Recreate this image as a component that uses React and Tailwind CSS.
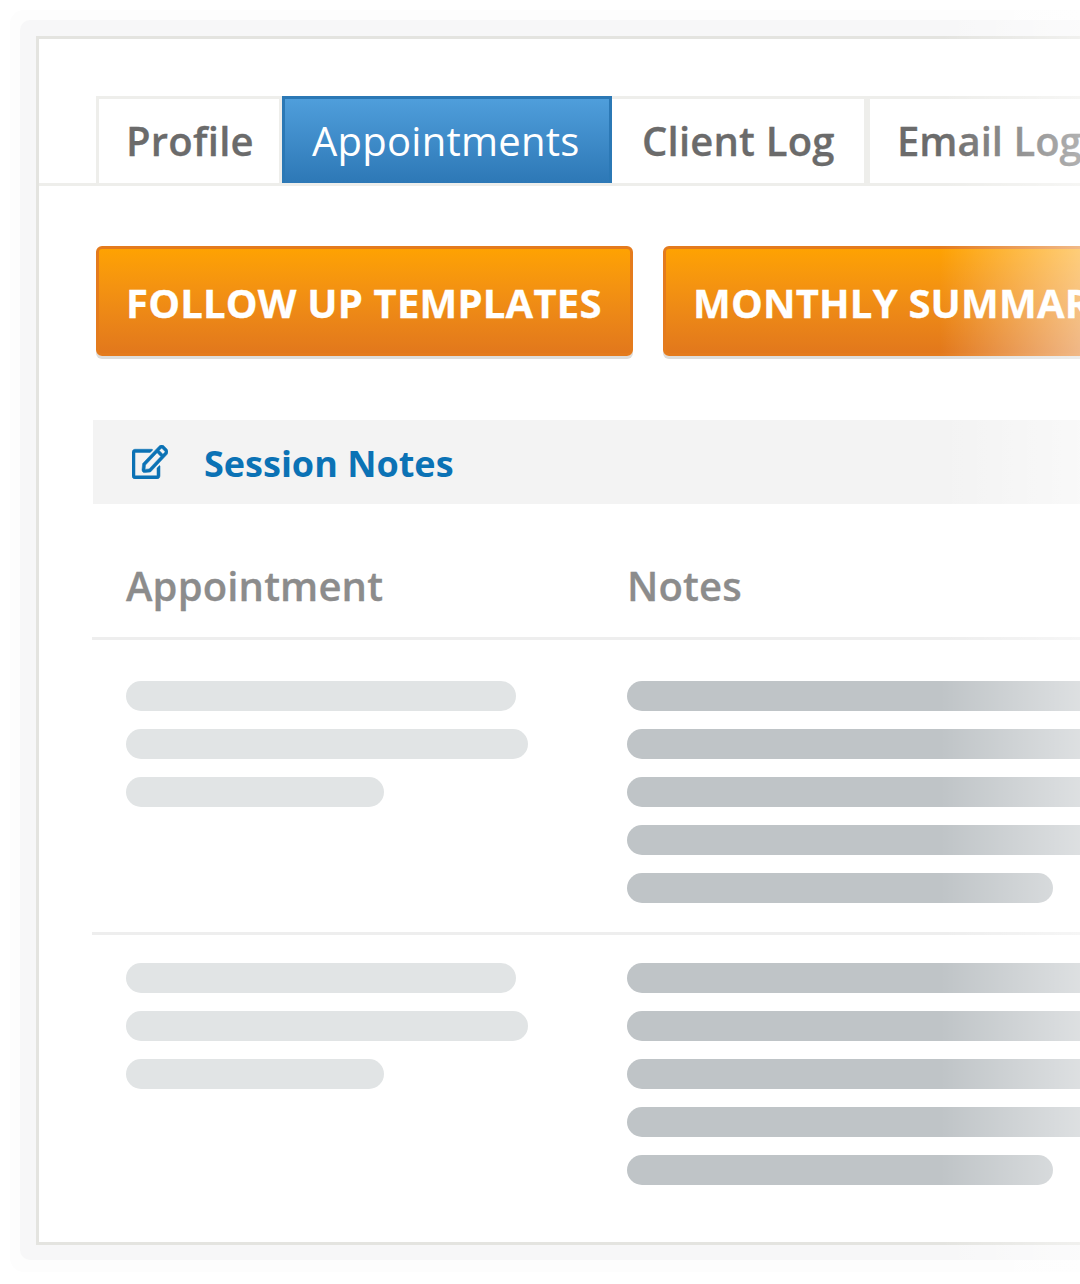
import React from 'react'
import { FaRegEdit } from 'react-icons/fa'

const TABS = [
  {
    label: 'Profile',
    className:
      'w-[186px] border-[#eeeeeb] border-b-0 pl-[27px] tracking-[0.25px] text-[#6b6b6b] font-semibold [-webkit-text-stroke:0.3px]',
  },
  {
    label: 'Appointments',
    className:
      'w-[330px] border-[#2b78b5] border-b-0 bg-gradient-to-b from-[#4f9edb] to-[#2d78b6] pl-[27px] tracking-[0.25px] text-white font-normal',
  },
  {
    label: 'Client Log',
    className:
      'w-[255px] border-[#eeeeeb] border-b-0 border-l-0 pl-[30px] tracking-[0.2px] text-[#6b6b6b] font-semibold [-webkit-text-stroke:0.3px]',
  },
  {
    label: 'Email Log',
    className: 'w-[300px] border-[#eeeeeb] border-b-0 pl-[27px] text-[#6b6b6b] font-semibold [-webkit-text-stroke:0.3px]',
  },
]

const ROWS = [
  { top: 'pt-[41px] pb-[29px]', border: 'border-b-[3px]' },
  { top: 'pt-[28px] pb-[57px]', border: '' },
]

const LEFT_BARS = ['w-[390px]', 'w-[402px]', 'w-[258px]']
const RIGHT_BARS = ['w-[600px]', 'w-[600px]', 'w-[600px]', 'w-[600px]', 'w-[426px]']

function ActionButton({ label, className }) {
  return (
    <button
      className={`h-[110px] shrink-0 rounded-[6px] border-[3px] border-[#e47b1d] bg-gradient-to-b from-[#fea202] to-[#e2781c] pl-[27px] pt-[4px] text-left text-[40px] font-bold tracking-[0.2px] whitespace-nowrap text-white shadow-[0_3px_0_#dddddb] [-webkit-text-stroke:0.3px] ${className}`}
    >
      {label}
    </button>
  )
}

export default function App() {
  return (
    <div className="relative h-[1284px] w-[1080px] overflow-hidden bg-white font-['Open_Sans',sans-serif]">
      <div className="ml-[10px] mt-[10px] w-[1200px] rounded-[14px] bg-[#fdfdfd] pb-[12px] pl-[10px] pt-[10px]">
        <div className="rounded-[10px] bg-[#f7f7f8] pb-[15px] pl-[16px] pt-[16px]">
          <div className="h-[1209px] border-[3px] border-[#e4e4e0] bg-white">
            <div className="mt-[57px] flex h-[90px] gap-0 border-b-[3px] border-[#eeeeeb] pl-[57px]">
              {TABS.map((tab) => (
                <div
                  key={tab.label}
                  className={`flex h-[87px] shrink-0 items-center border-[3px] text-[40px] whitespace-nowrap ${tab.className}`}
                >
                  {tab.label}
                </div>
              ))}
            </div>

            <div className="ml-[57px] mt-[60px] flex gap-[30px]">
              <ActionButton label="FOLLOW UP TEMPLATES" className="w-[537px]" />
              <ActionButton label="MONTHLY SUMMARY" className="w-[537px]" />
            </div>

            <div className="ml-[54px] mt-[64px] flex h-[84px] items-center bg-[#f3f3f3] pl-[39px] text-[36px] font-bold text-[#0b72b5]">
              <FaRegEdit
                preserveAspectRatio="none"
                stroke="currentColor"
                strokeWidth="8"
                className="h-[34px] w-[36px] shrink-0"
              />
              <span className="ml-[36px] pt-[4px]">Session Notes</span>
            </div>

            <div className="ml-[53px]">
              <div className="flex h-[136px] items-center border-b-[3px] border-[#eeeeee] pl-[34px] pt-[31px] text-[40px] font-semibold tracking-[0.15px] text-[#8c8c8c] [-webkit-text-stroke:0.3px]">
                <div className="w-[501px]">Appointment</div>
                <div>Notes</div>
              </div>

              {ROWS.map((row, index) => (
                <div key={index} className={`flex border-[#eeeeee] pl-[34px] ${row.top} ${row.border}`}>
                  <div className="flex w-[501px] shrink-0 flex-col gap-[18px]">
                    {LEFT_BARS.map((width, i) => (
                      <div key={i} className={`h-[30px] rounded-full bg-[#e1e4e5] ${width}`} />
                    ))}
                  </div>
                  <div className="flex flex-col gap-[18px]">
                    {RIGHT_BARS.map((width, i) => (
                      <div key={i} className={`h-[30px] rounded-full bg-[#bfc4c7] ${width}`} />
                    ))}
                  </div>
                </div>
              ))}
            </div>
          </div>
        </div>
      </div>

      {/* fade over the right edge */}
      <div className="pointer-events-none absolute inset-y-0 right-0 w-[140px] bg-gradient-to-r from-white/0 to-white/47" />
    </div>
  )
}
